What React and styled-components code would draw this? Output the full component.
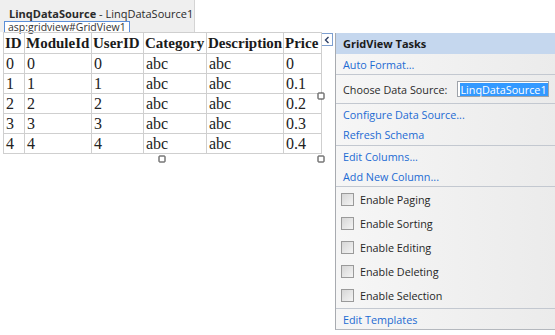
import React from 'react';
import styled, { createGlobalStyle } from 'styled-components';

const GlobalStyle = createGlobalStyle`
  html, body {
    margin: 0;
    padding: 0;
    background: #ffffff;
    overflow: hidden;
  }
`;

const Page = styled.div`
  display: flex;
  align-items: flex-start;
  width: 555px;
  height: 335px;
  overflow: hidden;
`;

const Designer = styled.div`
  display: flex;
  flex-direction: column;
  width: 321px;
  flex-shrink: 0;
`;

const ControlTab = styled.div`
  width: 194px;
  height: 32px;
  background: #efefef;
  border-right: 1px solid #d4d4d4;
  display: flex;
  flex-direction: column;
`;

const TabTitle = styled.div`
  padding: 7px 0 0 9px;
  font-family: 'Open Sans', 'Liberation Sans', sans-serif;
  font-size: 11px;
  line-height: 14px;
  color: #2a2a2a;
  white-space: nowrap;

  b {
    font-weight: 700;
  }
`;

const ControlLabel = styled.div`
  align-self: flex-start;
  margin-left: 4px;
  padding: 0 3px;
  height: 10px;
  border: 1px solid #5c8fd8;
  background: #ffffff;
  font-family: 'Open Sans', 'Liberation Sans', sans-serif;
  font-size: 10.5px;
  line-height: 10px;
  color: #333;
  white-space: nowrap;
`;

const GridWrap = styled.div`
  position: relative;
  margin-left: 3px;

  &::after {
    content: '';
    position: absolute;
    left: 318px;
    top: -12px;
    height: 152px;
    width: 1px;
    background: #d8d8d8;
    z-index: -1;
  }
`;

const Grid = styled.table`
  border-collapse: collapse;
  table-layout: fixed;
  width: 318px;
  border: 1px solid #3c3c3c;
  font-family: 'Liberation Serif', 'Times New Roman', serif;
  font-size: 16px;
  color: #222;
`;

const Th = styled.th`
  height: 20px;
  padding: 0 1px;
  border: 1px solid #cfcfcf;
  text-align: left;
  font-size: 15px;
  font-weight: 700;
  color: #1a1a1a;
  white-space: nowrap;
  overflow: hidden;
`;

const Td = styled.td`
  height: 19px;
  padding: 0 2px;
  border: 1px solid #cfcfcf;
  white-space: nowrap;
`;

const Handle = styled.span`
  position: absolute;
  width: 5px;
  height: 5px;
  border: 1px solid #333;
  border-radius: 1px;
  background: #fff;
  transform: translate(-50%, -50%);
  left: ${p => p.x}px;
  top: ${p => p.y}px;
`;

const SmartTag = styled.div`
  margin-top: 33px;
  width: 10px;
  height: 11px;
  flex-shrink: 0;
  border: 1px solid #7d9fd0;
  background: #fff;
  display: flex;
  align-items: center;
  justify-content: center;
`;

const Panel = styled.div`
  margin-top: 33px;
  margin-left: 2px;
  width: 222px;
  flex-shrink: 0;
  border-left: 1px solid #a8abb0;
  border-bottom: 1px solid #b4b8be;
  background: linear-gradient(to right, #f6f6f6, #ebebeb);
  font-family: 'Open Sans', 'Liberation Sans', sans-serif;
  font-size: 10.8px;
  color: #2b2b2b;
`;

const PanelHeader = styled.div`
  height: 21px;
  display: flex;
  align-items: center;
  padding-left: 7px;
  background: #c5d7ee;
  font-size: 11px;
  font-weight: 700;
  color: #1a1a1a;
`;

const Section = styled.div`
  display: flex;
  flex-direction: column;
  padding-bottom: ${p => p.pb || 0}px;
  & + & {
    border-top: 1px solid #c3c8d0;
  }
`;

const LinkItem = styled.div`
  height: 20px;
  display: flex;
  align-items: center;
  padding-left: 7px;
  color: #1d6bd3;
  white-space: nowrap;
`;

const FieldRow = styled.div`
  height: 28px;
  display: flex;
  align-items: center;
  padding-left: 7px;
  white-space: nowrap;
`;

const SourceInput = styled.div`
  margin-left: 10px;
  width: 88px;
  height: 14px;
  padding: 0 0 0 2px;
  border: 1px solid #9ea3aa;
  background: #fff;
  display: flex;
  align-items: center;

  span {
    background: #3399ff;
    color: #fff;
    line-height: 13px;
    padding-right: 1px;
  }
`;

const CheckRow = styled.label`
  height: 24px;
  display: flex;
  align-items: center;
  padding-left: 5px;
  gap: 6px;
  color: #252525;
  white-space: nowrap;
`;

const Box = styled.span`
  width: 11px;
  height: 11px;
  border: 1px solid #9a9a9a;
  background: linear-gradient(135deg, #d6d6d6, #f4f4f4);
`;

const columns = ['ID', 'ModuleId', 'UserID', 'Category', 'Description', 'Price'];
const widths = [21, 67, 52, 63, 77, 38];
const rows = [0, 1, 2, 3, 4].map(i => [i, i, i, 'abc', 'abc', i === 0 ? '0' : `0.${i}`]);

const options = ['Enable Paging', 'Enable Sorting', 'Enable Editing', 'Enable Deleting', 'Enable Selection'];

export default function App() {
  return (
    <>
      <GlobalStyle />
      <Page>
        <Designer>
          <ControlTab>
            <TabTitle>
              <b>LinqDataSource</b> - LinqDataSource1
            </TabTitle>
            <ControlLabel>asp:gridview#GridView1</ControlLabel>
          </ControlTab>
          <GridWrap>
            <Grid>
              <colgroup>
                {widths.map((w, i) => (
                  <col key={i} style={{ width: w }} />
                ))}
              </colgroup>
              <thead>
                <tr>
                  {columns.map(c => (
                    <Th key={c}>{c}</Th>
                  ))}
                </tr>
              </thead>
              <tbody>
                {rows.map((r, i) => (
                  <tr key={i}>
                    {r.map((v, j) => (
                      <Td key={j}>{v}</Td>
                    ))}
                  </tr>
                ))}
              </tbody>
            </Grid>
            <Handle x={318} y={64} />
            <Handle x={159} y={127} />
            <Handle x={318} y={127} />
          </GridWrap>
        </Designer>
        <SmartTag>
          <svg width="6" height="8" viewBox="0 0 6 8">
            <path d="M4.5 1 L1.5 4 L4.5 7" fill="none" stroke="#2d3f66" strokeWidth="1.4" />
          </svg>
        </SmartTag>
        <Panel>
          <PanelHeader>GridView Tasks</PanelHeader>
          <Section>
            <LinkItem>Auto Format...</LinkItem>
          </Section>
          <Section>
            <FieldRow>
              Choose Data Source:
              <SourceInput>
                <span>LinqDataSource1</span>
              </SourceInput>
            </FieldRow>
          </Section>
          <Section pb={1}>
            <LinkItem>Configure Data Source...</LinkItem>
            <LinkItem>Refresh Schema</LinkItem>
          </Section>
          <Section>
            <LinkItem>Edit Columns...</LinkItem>
            <LinkItem>Add New Column...</LinkItem>
          </Section>
          <Section pb={1}>
            {options.map(o => (
              <CheckRow key={o}>
                <Box />
                {o}
              </CheckRow>
            ))}
          </Section>
          <Section>
            <LinkItem>Edit Templates</LinkItem>
          </Section>
        </Panel>
      </Page>
    </>
  );
}
